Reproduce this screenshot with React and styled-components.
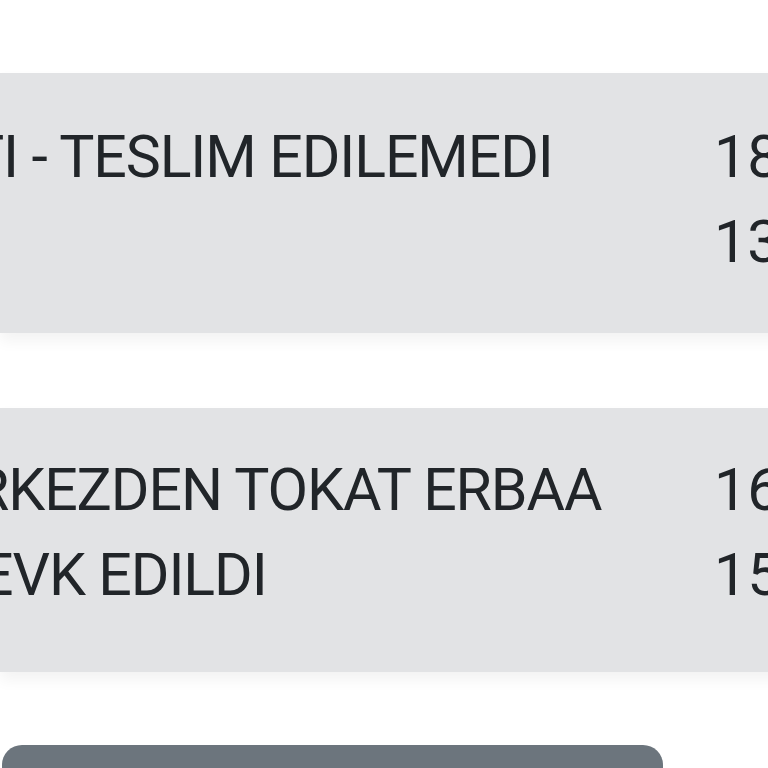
import React from 'react';
import styled, { createGlobalStyle } from 'styled-components';

const GlobalStyle = createGlobalStyle`
  html, body {
    margin: 0;
    padding: 0;
    background: #ffffff;
    overflow: hidden;
  }
  body {
    font-family: Roboto, "Liberation Sans", sans-serif;
    color: #212529;
  }
`;

const Page = styled.div`
  width: 768px;
  height: 768px;
  overflow: hidden;
  padding-top: 73px;
  box-sizing: border-box;
`;

const Card = styled.div`
  display: flex;
  width: 1000px;
  height: ${(p) => p.$height}px;
  margin-bottom: ${(p) => p.$gap}px;
  padding-top: ${(p) => p.$top}px;
  box-sizing: border-box;
  background: #e2e3e5;
  box-shadow: 0 8px 14px rgba(0, 0, 0, 0.05);
`;

const Status = styled.div`
  flex: 0 0 714px;
  overflow: hidden;
`;

const Dates = styled.div`
  flex: 1;
`;

const Line = styled.div`
  font-size: 59px;
  line-height: 85px;
  letter-spacing: -1.1px;
  white-space: nowrap;
  margin-left: -${(p) => p.$shift || 0}px;
  height: 85px;
`;

const DateLine = styled.div`
  font-size: 59px;
  line-height: 85px;
  white-space: nowrap;
`;

const Button = styled.button`
  display: block;
  width: 661px;
  height: 60px;
  margin-left: 2px;
  border: none;
  border-radius: 20px;
  background: #6c757d;
`;

const cards = [
  {
    height: 260,
    top: 41,
    gap: 75,
    lines: [
      { text: 'TI - TESLIM EDILEMEDI', shift: 31 },
      { text: '', shift: 0 },
    ],
    dates: ['18.03.2021', '13:42'],
  },
  {
    height: 264,
    top: 39,
    gap: 73,
    lines: [
      { text: 'RKEZDEN TOKAT ERBAA', shift: 27 },
      { text: 'EVK EDILDI', shift: 20 },
    ],
    dates: ['16.03.2021', '15:07'],
  },
];

export default function App() {
  return (
    <>
      <GlobalStyle />
      <Page>
        {cards.map((c, i) => (
          <Card key={i} $height={c.height} $top={c.top} $gap={c.gap}>
            <Status>
              {c.lines.map((l, j) => (
                <Line key={j} $shift={l.shift}>{l.text}</Line>
              ))}
            </Status>
            <Dates>
              {c.dates.map((d) => (
                <DateLine key={d}>{d}</DateLine>
              ))}
            </Dates>
          </Card>
        ))}
        <Button />
      </Page>
    </>
  );
}
